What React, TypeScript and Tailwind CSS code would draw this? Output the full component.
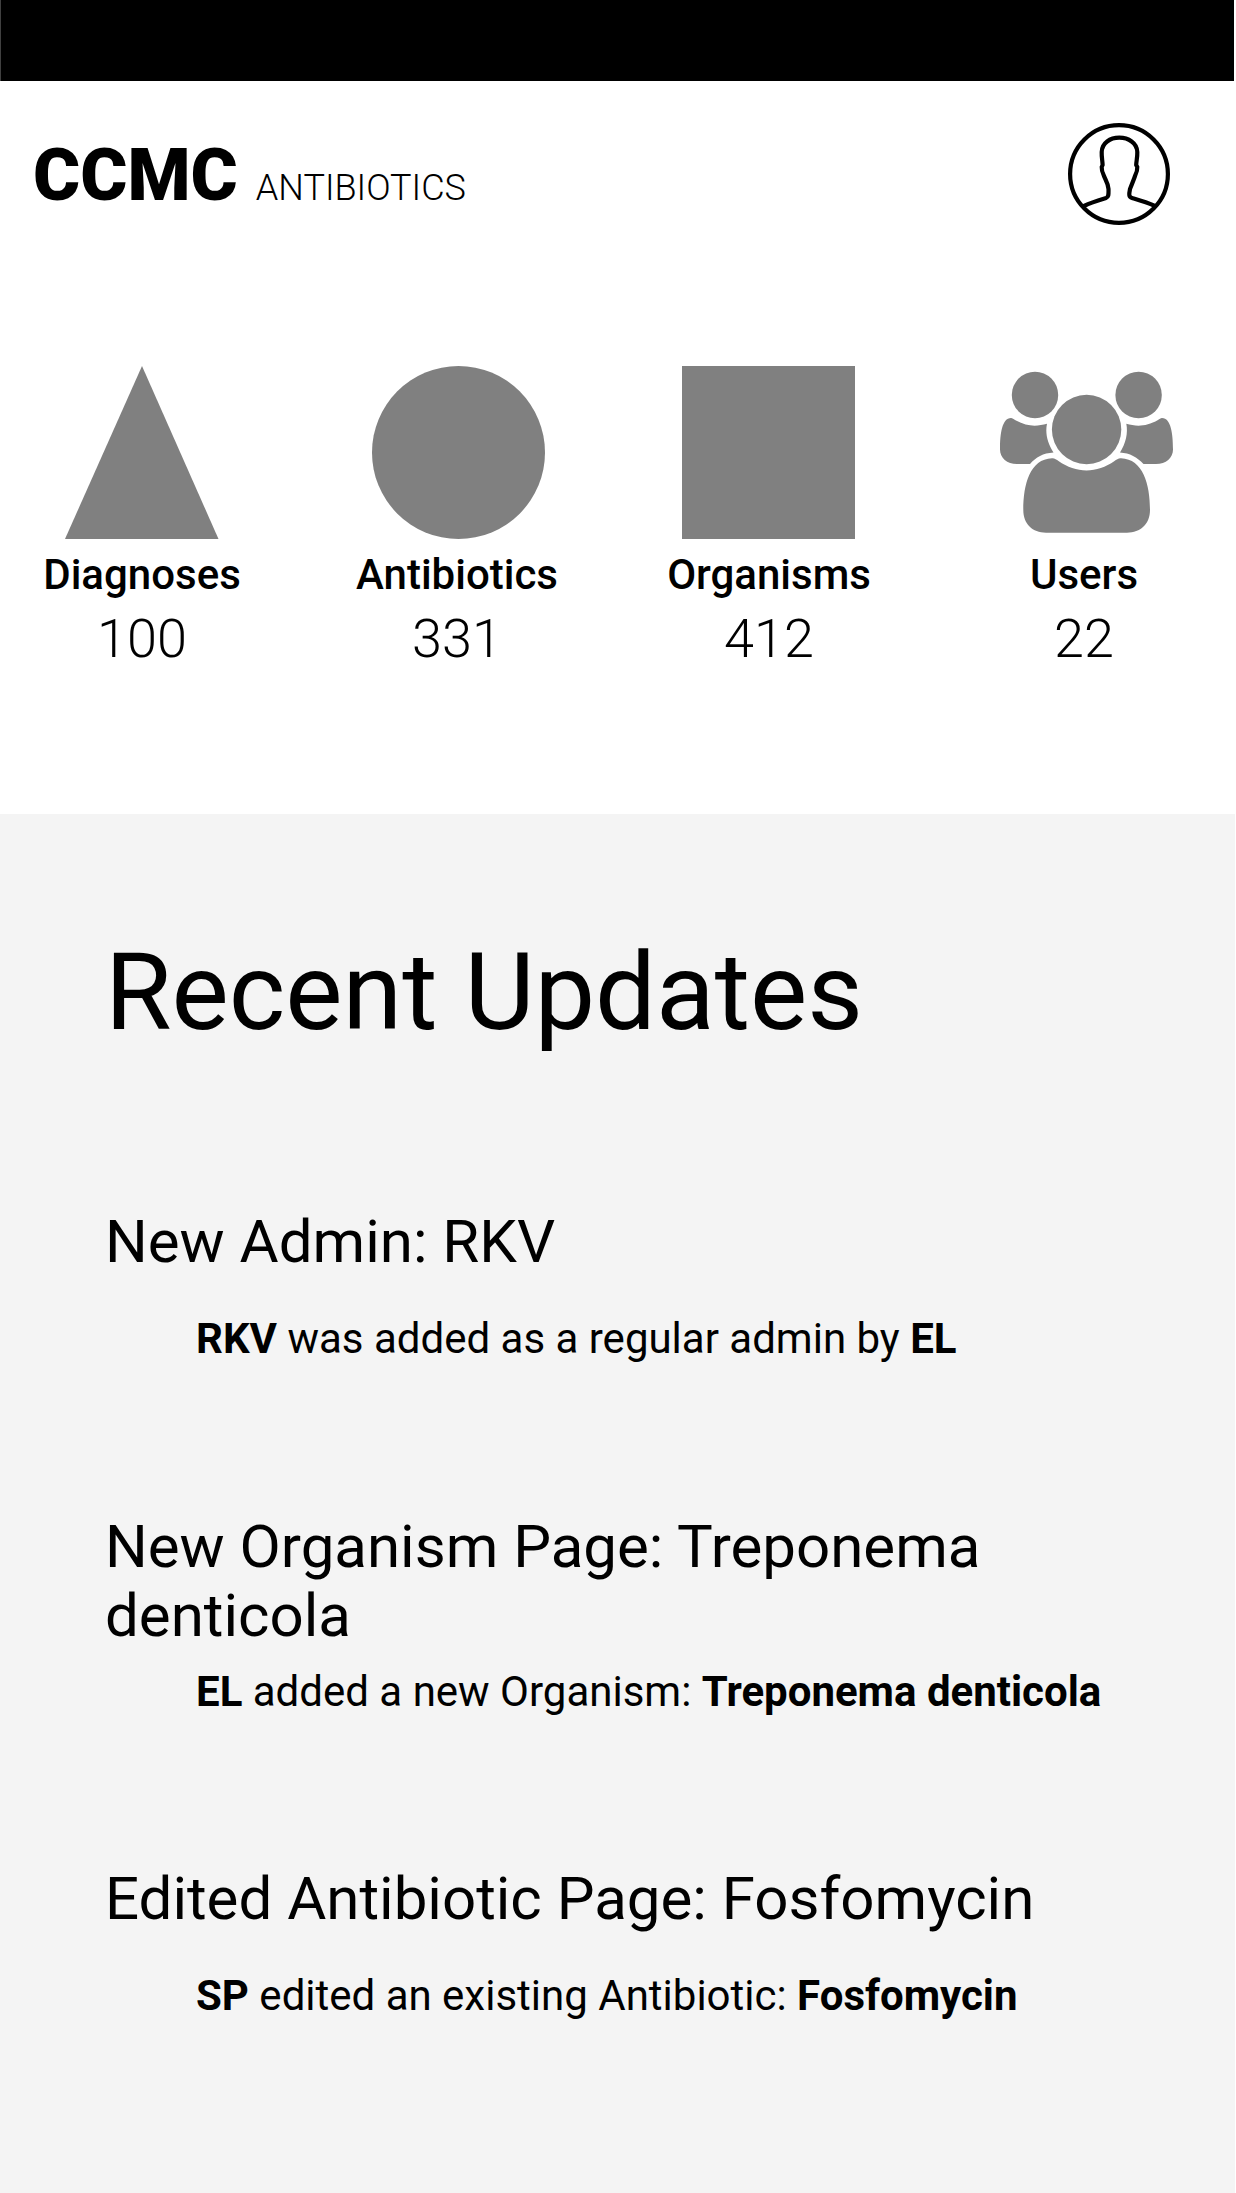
import React from "react";

function ProfileIcon() {
  return (
    <svg width="102" height="102" viewBox="0 0 102 102" fill="none" stroke="#000" strokeWidth="4.2" strokeLinecap="round" strokeLinejoin="round">
      <circle cx="51" cy="51" r="48.9" />
      <path d="M16 83 C24 79 33 76.500 38 75 C41 74 40.500 71 40.500 66 C40 60 37 56 36 53 C34.500 50 33.500 47 33.700 44 L34.600 42 C34.500 38 33.500 34 33.700 29 C34 20 42 14.700 51.300 14.700 C60.500 14.700 69 20 69.300 29 C69.500 34 68.300 38 68.200 42 L69.300 44 C69.500 47 68.500 50 67 53 C66 56 64 61 62 66 C61 71 60.500 74 64 75 C69 76.500 78 79 87 83" />
    </svg>
  );
}

function Triangle() {
  return (
    <svg width="174" height="173" viewBox="0 0 174 173">
      <path d="M87 0 L163.500 173 H10 Z" fill="#808080" />
    </svg>
  );
}

function UsersIcon() {
  return (
    <svg width="173" height="173" viewBox="0 0 173 173" fill="#808080">
      <circle cx="35" cy="29" r="23.200" />
      <circle cx="138.600" cy="29" r="23.200" />
      <circle cx="86.600" cy="63.500" r="34.700" />
      <path d="M11 52 C12.500 52 13.500 53 15 54 C27 61 37 60.500 47 57.800 C45 67 47.500 77.500 53.500 86.400 C43 87 36 91 30 98 H17 C7 98 0 92 0 83.500 C0 68 2 52 11 52 Z" />
      <path d="M162 52 C160.500 52 159.500 53 158 54 C146 61 136 60.500 126.300 57.800 C128.200 67 125.800 77.500 120 86.400 C130 87 137 91 143.500 98 H156 C166 98 173 92 173 83.500 C173 68 171 52 162 52 Z" />
      <path d="M52 92.200 C54.500 92 56.500 93.500 58.500 95 C76 107.500 97 107.500 114.500 95 C116.500 93.500 118.500 92 121 92.200 C143 93 150 118 150 144 C150 158 140.500 166.700 127 166.700 H46 C32.500 166.700 23.300 158 23.300 144 C23.300 118 30 93 52 92.200 Z" />
    </svg>
  );
}

function Stat({ label, value, icon, className }: { label: string; value: string; icon: React.ReactNode; className: string }) {
  return (
    <div className={`flex w-[200px] flex-col items-center ${className}`}>
      <div className="flex h-[173px] items-start">{icon}</div>
      <div className="mt-[11px] text-[42px] leading-[49px] font-medium">{label}</div>
      <div className="mt-[8px] text-[54px] leading-[63px] font-light">{value}</div>
    </div>
  );
}

function Update({ title, children, className }: { title: string; children: React.ReactNode; className: string }) {
  return (
    <article className={className}>
      <h2 className="w-[1000px] text-[60px] leading-[69px]">{title}</h2>
      <p className="pl-[91px] text-[42px] leading-[49px] whitespace-nowrap">{children}</p>
    </article>
  );
}

export default function App() {
  return (
    <div className="flex h-[2193px] w-[1236px] flex-col overflow-hidden bg-white font-['Roboto',sans-serif] text-black">
      <div className="h-[81px] w-[1234px] shrink-0 border-l border-[#404040] bg-black" />
      <header className="flex h-[285px] shrink-0 items-start justify-between pr-[66px] pl-[33px]">
        <div className="mt-[53px] flex items-baseline whitespace-nowrap">
          <span className="text-[72px] leading-[84px] font-black">CCMC</span>
          <span className="ml-[18px] text-[36px] leading-[42px] font-light">ANTIBIOTICS</span>
        </div>
        <div className="mt-[42px]">
          <ProfileIcon />
        </div>
      </header>
      <section className="flex h-[448px] shrink-0 pl-[42px]">
        <Stat className="" label="Diagnoses" value="100" icon={<Triangle />} />
        <Stat className="ml-[115px]" label="Antibiotics" value="331" icon={<div className="ml-[3px] size-[173px] rounded-full bg-[#808080]" />} />
        <Stat className="ml-[112px]" label="Organisms" value="412" icon={<div className="mr-[2px] size-[173px] bg-[#808080]" />} />
        <Stat className="ml-[115px]" label="Users" value="22" icon={<div className="ml-[5px]"><UsersIcon /></div>} />
      </section>
      <section className="h-[1379px] w-[1235px] shrink-0 bg-[#f4f4f4] pl-[105px]">
        <h1 className="pt-[115px] text-[108px] leading-[126px]">Recent Updates</h1>
        <Update className="mt-[152px] [&>p]:mt-[38px]" title="New Admin: RKV">
          <b>RKV</b> was added as a regular admin by <b>EL</b>
        </Update>
        <Update className="mt-[149px] [&>p]:mt-[17px]" title="New Organism Page: Treponema denticola">
          <b>EL</b> added a new Organism: <b>Treponema denticola</b>
        </Update>
        <Update className="mt-[148px] [&>p]:mt-[38px]" title="Edited Antibiotic Page: Fosfomycin">
          <b>SP</b> edited an existing Antibiotic: <b>Fosfomycin</b>
        </Update>
      </section>
    </div>
  );
}
